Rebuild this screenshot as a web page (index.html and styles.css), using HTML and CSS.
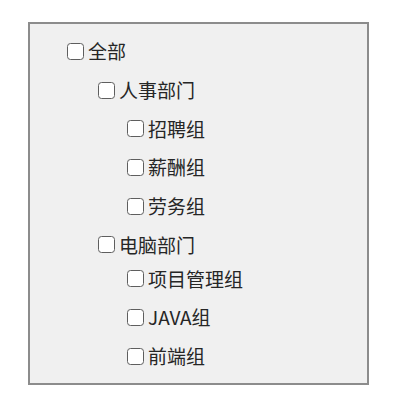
FILE: index.html
```html
<!DOCTYPE html>
<html lang="zh">
<head>
<meta charset="utf-8">
<link rel="stylesheet" href="styles.css">
</head>
<body>
<div class="panel">
  <ul class="tree">
    <li>
      <label class="row"><input type="checkbox" class="cb"><span class="txt">全部</span></label>
      <ul class="tree sub">
        <li>
          <label class="row"><input type="checkbox" class="cb"><span class="txt">人事部门</span></label>
          <ul class="tree sub">
            <li><label class="row"><input type="checkbox" class="cb"><span class="txt">招聘组</span></label></li>
            <li><label class="row"><input type="checkbox" class="cb"><span class="txt">薪酬组</span></label></li>
            <li><label class="row"><input type="checkbox" class="cb"><span class="txt">劳务组</span></label></li>
          </ul>
        </li>
        <li>
          <label class="row tight"><input type="checkbox" class="cb"><span class="txt">电脑部门</span></label>
          <ul class="tree sub">
            <li><label class="row"><input type="checkbox" class="cb"><span class="txt">项目管理组</span></label></li>
            <li><label class="row"><input type="checkbox" class="cb"><span class="txt">JAVA组</span></label></li>
            <li><label class="row"><input type="checkbox" class="cb"><span class="txt">前端组</span></label></li>
          </ul>
        </li>
      </ul>
    </li>
  </ul>
</div>
</body>
</html>
```
FILE: styles.css
```css
html, body {
  margin: 0;
  padding: 0;
  background: #ffffff;
}
body {
  font-family: "Noto Sans CJK SC", "Noto Sans", sans-serif;
  color: #262626;
}
.panel {
  box-sizing: border-box;
  margin: 22px 0 0 28px;
  width: 341px;
  height: 363px;
  border: 2px solid #8c8c8c;
  background: #f0f0f0;
  padding: 8px 0 0 37px;
}
.tree {
  list-style: none;
  margin: 0;
  padding: 0;
}
.sub {
  padding-left: 31px;
}
.sub .sub {
  padding-left: 29px;
}
.row {
  box-sizing: border-box;
  display: flex;
  align-items: center;
  height: 38.7px;
}
.row.tight {
  height: 34px;
  padding-top: 5px;
}
.cb {
  appearance: none;
  -webkit-appearance: none;
  box-sizing: border-box;
  width: 17px;
  height: 17px;
  margin: 0;
  border: 1.5px solid #5e5e5e;
  border-radius: 3.5px;
  background: #ffffff;
  flex: none;
}
.txt {
  margin-left: 4px;
  font-size: 19px;
  line-height: 22px;
}
```
